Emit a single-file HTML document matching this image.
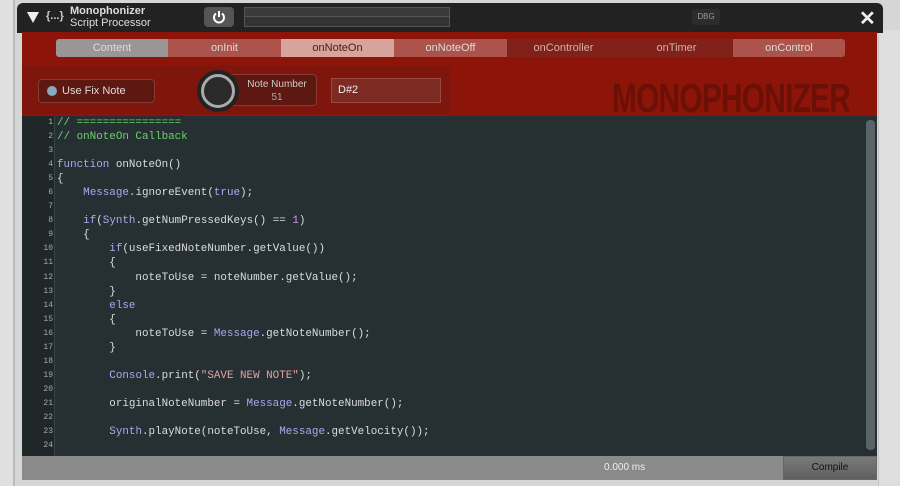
<!DOCTYPE html>
<html><head><style>
*{margin:0;padding:0;box-sizing:border-box}
body{width:900px;height:486px;background:#d6d6d6;position:relative;overflow:hidden;font-family:"Liberation Sans",sans-serif}
.abs{position:absolute}
.hdr{left:17px;top:3px;width:866px;height:30px;background:#222;border-radius:6px 6px 0 0}
.red{left:22px;top:32px;width:855px;height:84px;background:#8c1408}
.tab{position:absolute;top:39px;height:18px;font-size:11px;text-align:center;line-height:18px;color:#ddd}
.code{left:22px;top:116px;width:855px;height:340px;background:#263033}
.gut{left:22px;top:116px;width:33px;height:340px;background:#1f2729;border-right:1px solid #3a4446}
pre{font-family:"Liberation Mono",monospace;font-size:10.9px;line-height:14.04px;color:#dcdcdc}
.k{color:#a9a9f0}.c{color:#6ccf6c}.n{color:#e08ee0}.s{color:#e0a0a0}
</style></head><body>
<div class="abs" style="left:0;top:0;width:15px;height:486px;background:#e0e0e0;border-right:2px solid #bbb"></div>
<div class="abs" style="left:878px;top:30px;width:22px;height:456px;background:#dedede;border-left:1px solid #c4c4c4"></div>
<div class="abs hdr"></div>
<div class="abs" style="left:27px;top:12px;width:0;height:0;border-left:6px solid transparent;border-right:6px solid transparent;border-top:11px solid #eee"></div>
<div class="abs" style="left:46px;top:10px;font-size:11px;color:#ccc;font-weight:bold">{...}</div>
<div class="abs" style="left:70px;top:5px;font-size:11px;color:#ddd;font-weight:bold;line-height:12px">Monophonizer<br><span style="font-weight:normal">Script Processor</span></div>
<div class="abs" style="left:204px;top:7px;width:30px;height:20px;background:#555;border-radius:4px"></div>
<svg class="abs" style="left:211px;top:9px" width="16" height="16" viewBox="0 0 16 16"><path d="M5 4.5A5 5 0 1 0 11 4.5" fill="none" stroke="#fff" stroke-width="2"/><path d="M8 2v6" stroke="#fff" stroke-width="2"/></svg>
<div class="abs" style="left:244px;top:7px;width:206px;height:20px;background:#333;border:1px solid #555"><div style="height:9px;border-bottom:1px solid #555;background:#3a3a3a"></div></div>
<div class="abs" style="left:692px;top:9px;width:28px;height:16px;background:#2c2c2c;border-radius:3px;font-size:8px;color:#999;text-align:center;line-height:16px">DBG</div>
<div class="abs" style="left:859px;top:6px;font-size:20px;color:#eee;font-weight:bold">✕</div>
<div class="abs red"></div>
<div class="tab" style="left:56px;width:112px;background:#9a9696;color:#ddd;border-radius:3px 0 0 3px">Content</div>
<div class="tab" style="left:168px;width:113px;background:#ac534b">onInit</div>
<div class="tab" style="left:281px;width:113px;background:#d8a39d;color:#4a1a14">onNoteOn</div>
<div class="tab" style="left:394px;width:113px;background:#ac534b">onNoteOff</div>
<div class="tab" style="left:507px;width:113px;background:#80221a;color:#d8b0aa">onController</div>
<div class="tab" style="left:620px;width:113px;background:#80221a;color:#d8b0aa">onTimer</div>
<div class="tab" style="left:733px;width:112px;background:#ac534b;border-radius:0 3px 3px 0">onControl</div>
<div class="abs" style="left:22px;top:66px;width:429px;height:48px;background:#7e160d;border-radius:0 6px 6px 0"></div>
<div class="abs" style="left:38px;top:79px;width:117px;height:24px;background:#5e1812;border:1px solid #8a3a30;border-radius:4px;font-size:11px;color:#ddd;line-height:22px;padding-left:23px">Use Fix Note</div>
<div class="abs" style="left:47px;top:86px;width:10px;height:10px;border-radius:50%;background:#8ab"></div>
<div class="abs" style="left:229px;top:74px;width:88px;height:32px;background:#5e1812;border:1px solid #8a3a30;border-radius:4px;font-size:10px;color:#ccc;text-align:center;line-height:13px;padding-top:3px;padding-left:8px">Note Number<br><span style="color:#aaa">51</span></div>
<div class="abs" style="left:197px;top:70px;width:42px;height:42px;border-radius:50%;background:#222"></div>
<div class="abs" style="left:201px;top:74px;width:34px;height:34px;border-radius:50%;border:3px solid #aaa;background:#2a2a2a"></div>
<div class="abs" style="left:331px;top:78px;width:110px;height:25px;background:#7c2a22;border:1px solid #9a4a40;font-size:11px;color:#eee;line-height:23px;padding-left:6px">D#2</div>
<div class="abs" style="left:612px;top:75px;font-size:41px;font-weight:bold;color:#6a1006;transform:scaleX(0.727);transform-origin:left top;letter-spacing:-1px">MONOPHONIZER</div>
<div class="abs code"></div>
<div class="abs gut"></div>
<pre class="abs" style="left:22px;top:116px;width:31px;font-size:8px;color:#aaa;text-align:right">1
2
3
4
5
6
7
8
9
10
11
12
13
14
15
16
17
18
19
20
21
22
23
24</pre>
<pre class="abs" style="left:57px;top:116px"><span class="c">// ================
// onNoteOn Callback</span>

<span class="k">function</span> onNoteOn()
{
    <span class="k">Message</span>.ignoreEvent(<span class="k">true</span>);

    <span class="k">if</span>(<span class="k">Synth</span>.getNumPressedKeys() == <span class="n">1</span>)
    {
        <span class="k">if</span>(useFixedNoteNumber.getValue())
        {
            noteToUse = noteNumber.getValue();
        }
        <span class="k">else</span>
        {
            noteToUse = <span class="k">Message</span>.getNoteNumber();
        }

        <span class="k">Console</span>.print(<span class="s">"SAVE NEW NOTE"</span>);

        originalNoteNumber = <span class="k">Message</span>.getNoteNumber();

        <span class="k">Synth</span>.playNote(noteToUse, <span class="k">Message</span>.getVelocity());
</pre>
<div class="abs" style="left:866px;top:120px;width:9px;height:330px;background:#5a6466;border-radius:4px"></div>
<div class="abs" style="left:22px;top:456px;width:855px;height:24px;background:#8a8a8a"></div>
<div class="abs" style="left:604px;top:462px;font-size:10px;color:#eee">0.000 ms</div>
<div class="abs" style="left:783px;top:456px;width:94px;height:24px;background:linear-gradient(#7a7a7a,#5e5e5e);border:1px solid #666;font-size:10px;color:#111;text-align:center;line-height:22px">Compile</div>
</body></html>
